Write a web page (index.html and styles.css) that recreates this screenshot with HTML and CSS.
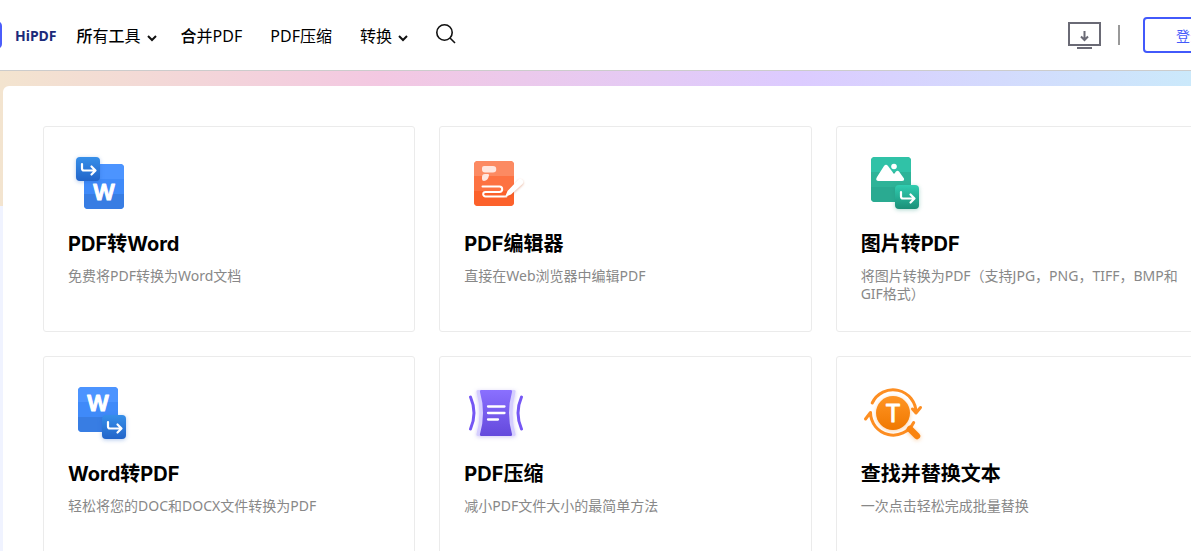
FILE: index.html
```
<!DOCTYPE html>
<html lang="zh-CN">
<head>
<meta charset="utf-8">
<meta name="viewport" content="width=device-width, initial-scale=1">
<title>HiPDF</title>
<link rel="stylesheet" href="styles.css">
</head>
<body>
<svg class="defs" aria-hidden="true">
  <defs>
    <linearGradient id="blue" x1="0" y1="0" x2="0" y2="1"><stop offset="0" stop-color="#368fe9"/><stop offset="1" stop-color="#2264c9"/></linearGradient>
    <linearGradient id="green" x1="0" y1="0" x2="0" y2="1"><stop offset="0" stop-color="#30cdb0"/><stop offset="1" stop-color="#1b8f78"/></linearGradient>
    <linearGradient id="purple" x1="0" y1="0" x2="0" y2="1"><stop offset="0" stop-color="#8a70ff"/><stop offset="1" stop-color="#6449dc"/></linearGradient>
    <linearGradient id="orange" x1="0" y1="0" x2="0" y2="1"><stop offset="0" stop-color="#ff9524"/><stop offset="1" stop-color="#f07800"/></linearGradient>
    <symbol id="turn" viewBox="0 0 24 24"><path d="M6 7v4.500q0 2 2 2h11M15.500 9.500l4 4-4 4" fill="none" stroke="#fff" stroke-width="2.200" stroke-linecap="round" stroke-linejoin="round"/></symbol>
  </defs>
</svg>
<header class="header">
  <div class="header-inner">
    <a class="brand" href="#"><span class="brand-mark"></span><span>HiPDF</span></a>
    <nav class="nav">
      <a class="nav-link" href="#"><span><b>所</b>有<b>工</b>具</span><svg class="chevron" viewBox="0 0 10 8"><path d="M1 2l4 4 4-4"/></svg></a>
      <a class="nav-link" href="#"><span><b>合</b>并PDF</span></a>
      <a class="nav-link" href="#">PDF压缩</a>
      <a class="nav-link" href="#"><span>转换</span><svg class="chevron" viewBox="0 0 10 8"><path d="M1 2l4 4 4-4"/></svg></a>
      <button class="icon-button search" type="button" aria-label="搜索"><svg viewBox="0 0 20 20"><circle cx="8.500" cy="8.500" r="7.700"/><path d="M14 14L19 19"/></svg></button>
    </nav>
    <div class="actions">
      <a class="download" href="#" aria-label="下载"><svg viewBox="0 0 34 28"><rect x="2" y="2" width="31" height="22"/><path d="M10 27h15M17.500 10v8.500M14 15.500L17.500 19l3.500-3.500"/></svg></a>
      <span class="divider"></span>
      <button class="login" type="button">登录</button>
    </div>
  </div>
</header>
<main class="stage">
  <section class="panel">
    <a class="card" href="#">
      <svg class="icon" viewBox="0 0 64 64">
        <rect x="16" y="13" width="40" height="45" rx="4" fill="#3f8af9"/>
        <path d="M16 28V17a4 4 0 0 1 4-4h32a4 4 0 0 1 4 4v11z" fill="#4c94ff"/>
        <path d="M16 43v11a4 4 0 0 0 4 4h32a4 4 0 0 0 4-4V43z" fill="#387de3"/>
        <text class="glyph" x="36" y="49">W</text>
        <rect class="glow-blue" x="8" y="6" width="24" height="24" rx="4" fill="url(#blue)"/>
        <use href="#turn" x="8" y="6" width="24" height="24"/>
      </svg>
      <h2>PDF转Word</h2>
      <p>免费将PDF转换为Word文档</p>
    </a>
    <a class="card" href="#">
      <svg class="icon" viewBox="0 0 64 64">
        <rect x="10" y="10" width="40" height="45" rx="4" fill="#fd7242"/>
        <path d="M10 25V14a4 4 0 0 1 4-4h32a4 4 0 0 1 4 4v11z" fill="#fc8a62"/>
        <path d="M10 40v11a4 4 0 0 0 4 4h32a4 4 0 0 0 4-4V40z" fill="#fc612b"/>
        <path d="M20 15h9a3.200 3.200 0 0 1 0 6.500h-8a3 3 0 0 1-3-3V17a2 2 0 0 1 2-2zM18 26a3 3 0 0 1 3-3h3q1.500 0 1 1.500Q24 29.500 20 30q-2 0-2-2z" fill="#ffe6df"/>
        <path d="M18.500 35.500h17a2.700 2.700 0 0 1 0 5.400h-14a2.300 2.300 0 0 0 0 4.600h21" fill="none" stroke="#fff" stroke-width="2" stroke-linecap="round"/>
        <path class="pen" d="M41 46l2.500-6L54 29a3 3 0 0 1 4.500 4L47 43.500z" fill="#fff"/>
      </svg>
      <h2>PDF编辑器</h2>
      <p>直接在Web浏览器中编辑PDF</p>
    </a>
    <a class="card" href="#">
      <svg class="icon" viewBox="0 0 64 64">
        <rect x="10" y="6" width="40" height="45" rx="4" fill="#2eb398"/>
        <path d="M10 21V10a4 4 0 0 1 4-4h32a4 4 0 0 1 4 4v11z" fill="#30c2a7"/>
        <path d="M10 36v11a4 4 0 0 0 4 4h32a4 4 0 0 0 4-4V36z" fill="#2aaa91"/>
        <path d="M16 26l7-11q2-2.500 4 0l6 8 2-2.500q1.500-1.500 3 0l5 7q.500 2.500-2 2.500H17q-3-.500-1-4z" fill="#fff"/>
        <circle cx="33" cy="15.500" r="2.800" fill="#fff"/>
        <rect class="glow-green" x="34" y="34" width="24" height="24" rx="4" fill="url(#green)"/>
        <use href="#turn" x="34" y="34" width="24" height="24"/>
      </svg>
      <h2>图片转PDF</h2>
      <p>将图片转换为PDF（支持JPG，PNG，TIFF，BMP和GIF格式）</p>
    </a>
    <a class="card" href="#">
      <svg class="icon" viewBox="0 0 64 64">
        <rect x="10" y="6" width="40" height="45" rx="4" fill="#3f8af9"/>
        <path d="M10 21V10a4 4 0 0 1 4-4h32a4 4 0 0 1 4 4v11z" fill="#4c94ff"/>
        <path d="M10 36v11a4 4 0 0 0 4 4h32a4 4 0 0 0 4-4V36z" fill="#387de3"/>
        <text class="glyph" x="30" y="30">W</text>
        <rect class="glow-blue" x="34" y="34" width="24" height="24" rx="4" fill="url(#blue)"/>
        <use href="#turn" x="34" y="34" width="24" height="24"/>
      </svg>
      <h2>Word转PDF</h2>
      <p>轻松将您的DOC和DOCX文件转换为PDF</p>
    </a>
    <a class="card" href="#">
      <svg class="icon" viewBox="0 0 64 64">
        <path class="glow-purple" d="M14 9h36q2 0 1.500 2-6 21 0 42 .500 2-1.500 2H14q-2 0-1.500-2 6-21 0-42-.500-2 1.500-2z" fill="#d5ceff"/>
        <path d="M17.500 9h29q2 0 1.500 2-6 21 0 42 .500 2-1.500 2h-29q-2 0-1.500-2 6-21 0-42-.500-2 1.500-2z" fill="url(#purple)"/>
        <path d="M24 25.500h16.500M24 32h16.500M24 38.500h10" stroke="#fff" stroke-width="2.300" stroke-linecap="round"/>
        <path d="M6.500 16q7 16 0 32M57.500 16q-7 16 0 32" fill="none" stroke="#7556f4" stroke-width="3" stroke-linecap="round"/>
      </svg>
      <h2>PDF压缩</h2>
      <p>减小PDF文件大小的最简单方法</p>
    </a>
    <a class="card" href="#">
      <svg class="icon" viewBox="0 0 64 64">
        <g fill="none" stroke="#fd8e22" stroke-width="3" stroke-linecap="round" stroke-linejoin="round">
          <path d="M11.200 22A23 23 0 0 1 55 32l4.500-5.500M55 32l-3.500-4"/>
          <path d="M4.500 38L9.500 31.500A22.800 22.800 0 0 0 52.700 41.500"/>
        </g>
        <path class="glow-orange" d="M49 48l7 7" stroke="#f98410" stroke-width="6.500" stroke-linecap="round"/>
        <circle class="glow-orange" cx="32" cy="32" r="17" fill="url(#orange)"/>
        <text class="glyph letter-t" x="32" y="41">T</text>
      </svg>
      <h2>查找并替换文本</h2>
      <p>一次点击轻松完成批量替换</p>
    </a>
  </section>
</main>
</body>
</html>
```
FILE: styles.css
```
* { box-sizing: border-box; }

body {
  margin: 0;
  overflow: hidden;
  background: #f0f3ff;
  color: #000;
  font-family: "Noto Sans", "Noto Sans CJK SC", sans-serif;
}

a { color: inherit; text-decoration: none; }
svg { display: block; }
.defs { position: absolute; width: 0; height: 0; }

.header {
  background: #fff;
  border-bottom: 1px solid #ccc;
}

/* The bar is wider than the viewport on both sides. */
.header-inner {
  display: flex;
  align-items: center;
  height: 70px;
  margin: 0 -46px 0 -26px;
}

.brand {
  display: flex;
  align-items: center;
  gap: 13px;
  color: #1b2a7a;
  font-size: 14px;
  font-weight: 700;
}

.brand-mark {
  width: 28px;
  height: 28px;
  border-radius: 5px;
  background: #4b5dfb;
}

.nav {
  display: flex;
  align-items: center;
  gap: 28px;
  margin-left: 20px;
  padding-top: 2px;
  font-size: 16px;
  line-height: 24px;
  white-space: nowrap;
}

.nav-link { display: flex; align-items: center; gap: 6px; }
.nav-link:first-child { margin-right: -4px; }
.nav-link b { font-weight: 500; }

.chevron {
  width: 10px;
  height: 8px;
  margin-top: 4px;
  fill: none;
  stroke: #111;
  stroke-width: 2;
}

.icon-button {
  padding: 0;
  border: 0;
  background: none;
}

.search { margin-bottom: 4px; }

.search svg {
  width: 20px;
  height: 20px;
  fill: none;
  stroke: #111;
  stroke-width: 1.6;
}

.actions {
  display: flex;
  align-items: center;
  margin-left: auto;
}

.download svg {
  width: 34px;
  height: 28px;
  fill: none;
  stroke: #6a6a75;
  stroke-width: 2;
}

.divider {
  width: 2px;
  height: 20px;
  margin: 0 23px 0 17px;
  background: #999;
}

.login {
  height: 36px;
  padding: 0 31px;
  border: 2px solid #4259fb;
  border-radius: 4px;
  background: #fff;
  color: #4259fb;
  font: 14px "Noto Sans", "Noto Sans CJK SC", sans-serif;
}

.stage {
  padding: 15px 0 40px 3px;
  background: linear-gradient(90deg, #f3e4cf, #f3c8e2 32%, #dccbff 67%, #cbe9fb) no-repeat 0 0 / 100% 135px;
}

.panel {
  display: grid;
  grid-template-columns: repeat(3, 1fr);
  grid-auto-rows: 1fr;
  gap: 24px;
  margin-right: -57px;
  padding: 40px;
  border-radius: 6px;
  background: #fff;
}

.card {
  padding: 24px 24px 28px;
  border: 1px solid #ebebeb;
  border-radius: 3px;
}

.card h2 {
  margin: 17px 0 11px;
  font-family: Inter, "Noto Sans CJK SC", sans-serif;
  font-size: 20px;
  font-weight: 700;
  line-height: 24px;
}

.card p {
  margin: 0;
  color: #888;
  font-size: 14px;
  line-height: 18px;
}

.icon { width: 64px; height: 64px; overflow: visible; }

.glyph {
  fill: #fff;
  stroke: #fff;
  stroke-width: 1;
  stroke-linejoin: round;
  font: 600 22px Inter, sans-serif;
  text-anchor: middle;
}

.letter-t { font-weight: 400; font-size: 24px; }

.glow-blue { filter: drop-shadow(0 1px 2px rgba(34, 100, 201, .35)); }
.glow-green { filter: drop-shadow(0 1px 2px rgba(27, 143, 120, .35)); }
.glow-purple { filter: drop-shadow(0 1px 2px rgba(100, 73, 220, .3)); }
.glow-orange { filter: drop-shadow(0 1px 2px rgba(240, 120, 0, .35)); }
.pen { filter: drop-shadow(0 1px 1px rgba(200, 80, 30, .4)); }
```
